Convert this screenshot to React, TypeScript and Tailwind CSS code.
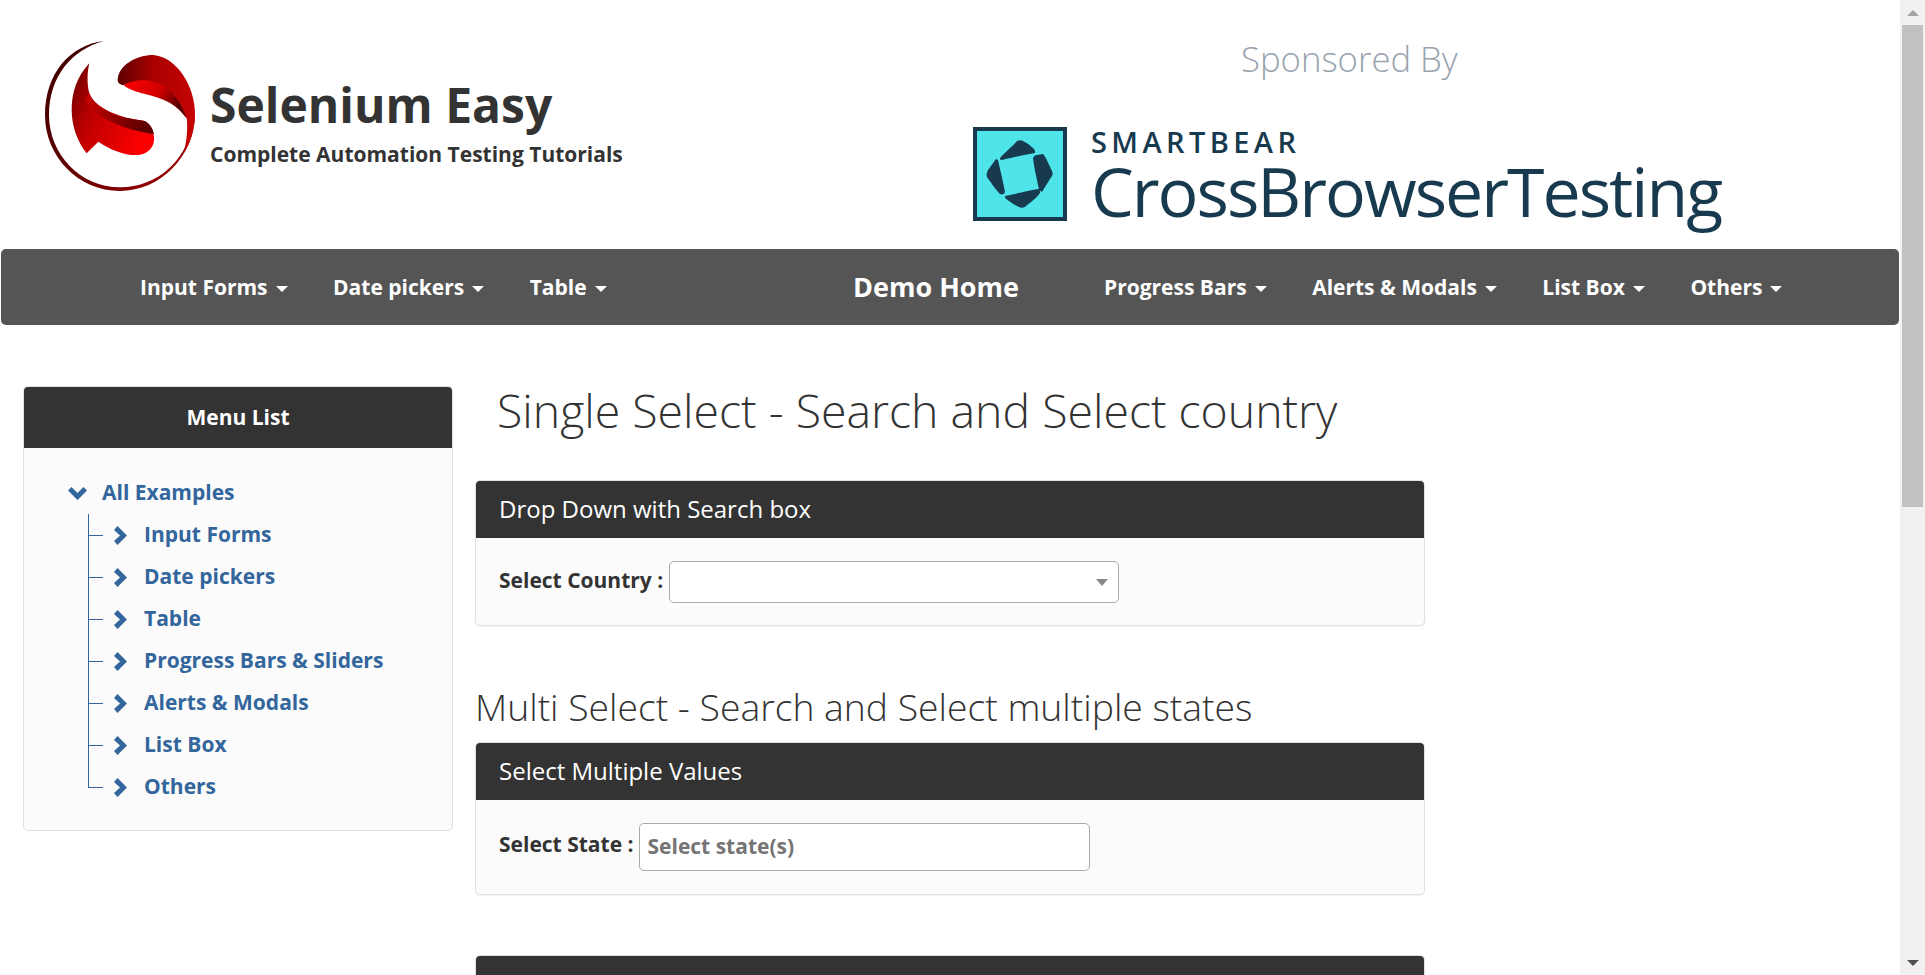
const navLeft = ["Input Forms", "Date pickers", "Table"];
const navRight = ["Progress Bars", "Alerts & Modals", "List Box", "Others"];
const menuItems = ["Input Forms", "Date pickers", "Table", "Progress Bars & Sliders", "Alerts & Modals", "List Box", "Others"];

const SeleniumLogo = () => (
	<svg viewBox="0 0 540 510" className="w-[180px] h-[170px] shrink-0">
		<defs>
			<linearGradient id="lobeTop" x1="0" y1="0" x2="1" y2="0">
				<stop offset="0" stopColor="#5e0000" />
				<stop offset="0.45" stopColor="#a80000" />
				<stop offset="1" stopColor="#c80404" />
			</linearGradient>
			<linearGradient id="lobeBand" x1="0" y1="0" x2="1" y2="0.4">
				<stop offset="0" stopColor="#ff0000" />
				<stop offset="0.6" stopColor="#d00000" />
				<stop offset="1" stopColor="#520000" />
			</linearGradient>
			<linearGradient id="lobeLow" x1="0" y1="0" x2="1" y2="0.5">
				<stop offset="0" stopColor="#640000" />
				<stop offset="0.4" stopColor="#bb0000" />
				<stop offset="1" stopColor="#fa0000" />
			</linearGradient>
			<linearGradient id="lobeDark" x1="0" y1="0" x2="1" y2="0.2">
				<stop offset="0" stopColor="#cc0000" />
				<stop offset="1" stopColor="#5c0000" />
			</linearGradient>
			<linearGradient id="ring" x1="0" y1="0" x2="1" y2="1">
				<stop offset="0" stopColor="#3a0000" />
				<stop offset="0.6" stopColor="#6a0000" />
				<stop offset="1" stopColor="#b00000" />
			</linearGradient>
		</defs>
		<path
			d="M222 33C120 45 45 130 45 255C45 380 145 483 270 483C390 483 495 380 495 250L480 300C470 385 385 472 270 472C150 472 57 372 57 255C57 140 125 58 222 33Z"
			fill="url(#ring)"
		/>
		<path
			d="M263 150C265 105 320 75 370 75C440 80 495 170 495 250C495 295 482 340 462 368C470 330 474 295 470 265C430 215 350 150 280 165C270 165 263 158 263 150Z"
			fill="url(#lobeTop)"
		/>
		<path d="M280 165C340 135 430 145 470 265C445 225 400 205 345 192C320 186 295 178 280 165Z" fill="url(#lobeBand)" />
		<path
			d="M178 100C140 140 125 190 125 240C125 290 145 340 170 370L205 335C240 360 290 378 325 375C360 370 375 345 372 320C370 295 355 275 340 272C270 265 195 235 178 190C170 160 172 125 178 100Z"
			fill="url(#lobeLow)"
		/>
		<path d="M165 212C205 270 290 300 372 312C368 292 355 275 340 272C270 265 195 240 178 190C172 198 168 204 165 212Z" fill="url(#lobeDark)" />
	</svg>
);

const CbtMark = () => (
	<svg viewBox="0 0 94 94" className="w-[94px] h-[94px] shrink-0">
		<rect width="94" height="94" fill="#173a4f" />
		<rect x="4" y="4" width="86" height="86" fill="#4fe3ea" />
		<path d="M27 31C33 24 38 21 44 14C46 13 48 13 50 14C56 17 62 22 62 24L62 26C50 28 38 31 29 33C27 33 27 32 27 31Z" fill="#173a4f" />
		<path d="M23 32L25 33C27 42 30 54 32 65C31 67 30 68 27 67C22 62 17 54 14 50C13 48 14 45 15 43Z" fill="#173a4f" />
		<path d="M64 28L70 27C72 29 74 33 78 42C80 46 80 47 79 49C75 55 72 60 69 65L66 63C64 52 61 41 60 31C61 29 62 28 64 28Z" fill="#173a4f" />
		<path d="M32 69C42 67 53 64 65 62C67 62 67 64 67 66C63 72 56 76 52 80C50 81 48 81 46 80C41 78 36 74 32 71Z" fill="#173a4f" />
	</svg>
);

const Caret = () => <span className="ml-[8px] mt-[3px] w-0 h-0 border-x-[6px] border-x-transparent border-t-[6px] border-t-white" />;

const ChevronRight = () => (
	<svg viewBox="0 0 13 19" className="w-[13px] h-[19px] shrink-0">
		<path d="M0 4L3.5 0L13 9.5L3.5 19L0 15L6 9.5Z" fill="#33669c" />
	</svg>
);

const ChevronDown = () => (
	<svg viewBox="0 0 19 13" className="w-[19px] h-[13px] shrink-0">
		<path d="M0 3.5L3.5 0L9.5 6L15.5 0L19 3.5L9.5 13Z" fill="#33669c" />
	</svg>
);

const Panel = ({ title, children, className }: { title?: string; children?: React.ReactNode; className?: string }) => (
	<div className={`border border-[#e0e0e0] rounded-[5px] bg-[#fbfbfb] overflow-hidden shadow-[0_1px_1px_rgba(0,0,0,0.05)] ${className ?? ""}`}>
		<div className="h-[57px] bg-[#333333] text-white text-[24px] leading-[56px] pl-[23px]">{title}</div>
		{children}
	</div>
);

const Scrollbar = () => (
	<div className="w-[25px] shrink-0 bg-[#f1f1f1] flex flex-col items-center">
		<div className="h-[25px] flex items-center justify-center">
			<span className="w-0 h-0 border-x-[6px] border-x-transparent border-b-[6px] border-b-[#a3a3a3]" />
		</div>
		<div className="w-[21px] h-[482px] bg-[#c1c1c1]" />
		<div className="mt-auto h-[25px] flex items-center justify-center">
			<span className="w-0 h-0 border-x-[6px] border-x-transparent border-t-[6px] border-t-[#505050]" />
		</div>
	</div>
);

export default function App() {
	return (
		<div className="flex h-[975px] overflow-hidden bg-white text-[#333333] font-['Open_Sans',sans-serif]">
			<div className="w-[1900px] shrink-0">
				{/* HEADER */}
				<div className="h-[249px] flex">
					<div className="w-[960px] flex items-start pl-[30px] pt-[30px]">
						<SeleniumLogo />
						<div className="pt-[47px]">
							<div className="text-[48px] leading-[56px] font-bold whitespace-nowrap">Selenium Easy</div>
							<div className="text-[21px] leading-[28px] font-bold whitespace-nowrap mt-[7px]">Complete Automation Testing Tutorials</div>
						</div>
					</div>
					<div className="flex-1 flex flex-col">
						<div className="pl-[281px] pt-[35px] text-[34.7px] leading-[48px] font-light text-[#99a3ae] whitespace-nowrap">Sponsored By</div>
						<div className="pl-[13px] pt-[44px] flex text-[#173a4f]">
							<CbtMark />
							<div className="ml-[24px]">
								<div className="text-[29px] leading-[30px] font-semibold tracking-[4.4px]">SMARTBEAR</div>
								<div className="text-[68px] leading-[70px] -mt-[1px] font-normal -tracking-[2px] whitespace-nowrap">CrossBrowserTesting</div>
							</div>
						</div>
					</div>
				</div>

				{/* NAV */}
				<div className="h-[76px] mx-[1px] rounded-[5px] bg-[#555555] flex items-center text-white text-[21px] font-bold pt-[1px]">
					<div className="flex items-center gap-[45.5px] pl-[139px] w-[852px]">
						{navLeft.map((item) => (
							<div key={item} className="flex items-center whitespace-nowrap">
								{item}
								<Caret />
							</div>
						))}
					</div>
					<div className="w-[251px] text-[27px] font-bold whitespace-nowrap">Demo Home</div>
					<div className="flex items-center gap-[45.5px]">
						{navRight.map((item) => (
							<div key={item} className="flex items-center whitespace-nowrap">
								{item}
								<Caret />
							</div>
						))}
					</div>
				</div>

				<div className="flex items-start pl-[23px] pt-[61px]">
					{/* SIDEBAR */}
					<div className="w-[430px] h-[445px] shrink-0 border border-[#e0e0e0] rounded-[5px] bg-[#fbfbfb] overflow-hidden">
						<div className="h-[61px] bg-[#333333] text-white text-[21px] font-bold text-center leading-[60px]">Menu List</div>
						<div className="pl-[44px] pt-[24px] text-[21px] font-bold text-[#33669c]">
							<div className="h-[42px] flex items-center">
								<ChevronDown />
								<span className="ml-[15px]">All Examples</span>
							</div>
							<ul className="ml-[20px] relative">
								<span className="absolute left-0 top-0 h-[273px] w-px bg-[#33669c]" />
								{menuItems.map((item) => (
									<li key={item} className="h-[42px] flex items-center">
										<span className="w-[15px] h-px bg-[#33669c]" />
										<span className="ml-[11px] flex">
											<ChevronRight />
										</span>
										<span className="ml-[17px] whitespace-nowrap">{item}</span>
									</li>
								))}
							</ul>
						</div>
					</div>

					{/* CONTENT */}
					<div className="ml-[22px] w-[950px] shrink-0">
						<h1 className="pl-[22px] text-[46.4px] leading-[52px] font-light -mt-[2px] whitespace-nowrap">Single Select - Search and Select country</h1>
						<Panel title="Drop Down with Search box" className="mt-[44px] h-[146px]">
							<div className="flex items-center pl-[23px] pt-[23px]">
								<span className="text-[21px] font-bold whitespace-nowrap -mt-[3px]">Select Country :</span>
								<div className="ml-[6px] w-[450px] h-[42px] bg-white border border-[#aaaaaa] rounded-[5px] flex items-center justify-end pr-[10px]">
									<span className="w-0 h-0 border-x-[6px] border-x-transparent border-t-[7px] border-t-[#888888]" />
								</div>
							</div>
						</Panel>
						<h2 className="text-[37.3px] leading-[46px] font-light mt-[58px] whitespace-nowrap">Multi Select - Search and Select multiple states</h2>
						<Panel title="Select Multiple Values" className="mt-[12px] h-[153px]">
							<div className="flex items-start pl-[23px] pt-[23px]">
								<span className="text-[21px] font-bold whitespace-nowrap mt-[6px]">Select State :</span>
								<div className="ml-[5px] w-[451px] h-[48px] bg-white border border-[#aaaaaa] rounded-[5px] flex items-center pl-[8px] text-[21px] font-bold text-[#757575]">
									Select state(s)
								</div>
							</div>
						</Panel>
						<Panel className="mt-[60px] h-[100px]" />
					</div>
				</div>
			</div>
			<Scrollbar />
		</div>
	);
}
